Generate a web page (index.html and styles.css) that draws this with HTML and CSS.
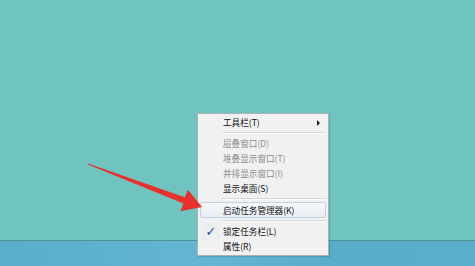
FILE: index.html
```html
<!DOCTYPE html>
<html>
<head>
<meta charset="utf-8">
<link rel="stylesheet" href="styles.css">
</head>
<body>
<div class="screen">
  <div class="desktop"></div>
  <div class="taskbar"></div>
  <div class="menu">
    <div class="item tall"><span class="label">工具栏(T)</span><span class="sub"></span></div>
    <div class="sep"></div>
    <div class="item dis"><span class="label">层叠窗口(D)</span></div>
    <div class="item dis"><span class="label">堆叠显示窗口(T)</span></div>
    <div class="item dis"><span class="label">并排显示窗口(I)</span></div>
    <div class="item"><span class="label">显示桌面(S)</span></div>
    <div class="sep"></div>
    <div class="item tall hot"><span class="label">启动任务管理器(K)</span></div>
    <div class="sep"></div>
    <div class="item"><span class="check">✓</span><span class="label">锁定任务栏(L)</span></div>
    <div class="item"><span class="label">属性(R)</span></div>
  </div>
  <svg class="arrow" width="475" height="266" viewBox="0 0 475 266">
    <polygon points="88,163.5 184.8,197.2 187.9,189.8 202,207 180.4,211.2 183.4,203.6 88,164.5" fill="#e8312d"/>
  </svg>
</div>
</body>
</html>
```
FILE: styles.css
```css
html, body {
  margin: 0;
  padding: 0;
}
body {
  font-family: "Noto Sans CJK SC", "Noto Sans", sans-serif;
}
.screen {
  position: relative;
  width: 475px;
  height: 266px;
  overflow: hidden;
  display: flex;
  flex-direction: column;
}
.desktop {
  height: 241px;
  background: #70c4c0;
  border-bottom: 1px solid #4b9298;
  box-sizing: border-box;
}
.taskbar {
  flex: 1;
  background: linear-gradient(90deg, #5aaecb 0%, #64b6d2 45%, #58adca 70%, #5aaecb 100%);
}
.menu {
  position: absolute;
  left: 197px;
  top: 113px;
  width: 132px;
  height: 143px;
  box-sizing: border-box;
  background: #f1f1f1;
  border: 1px solid #a9b1b1;
  padding: 0 2px;
  display: flex;
  flex-direction: column;
  box-shadow: 1px 1px 1px rgba(0,0,0,0.12);
}
.item {
  position: relative;
  height: 15px;
  display: flex;
  align-items: center;
  padding-left: 23px;
  font-size: 8.6px;
  color: #111;
  box-sizing: border-box;
}
.item.tall {
  height: 16px;
}
.item.dis {
  color: #8e8e8e;
}
.item.hot {
  background: linear-gradient(#f4f7fa, #e8eef4);
  border: 1px solid #c2d2e2;
  border-radius: 2px;
  padding-left: 22px;
}
.label {
  line-height: 1;
  white-space: nowrap;
}
.sub {
  position: absolute;
  right: 6px;
  top: 6px;
  width: 0;
  height: 0;
  border-left: 3px solid #222;
  border-top: 3px solid transparent;
  border-bottom: 3px solid transparent;
}
.check {
  position: absolute;
  left: 2px;
  top: -1px;
  width: 18px;
  height: 17px;
  display: flex;
  align-items: center;
  justify-content: center;
  color: #1e4f9c;
  font-size: 13px;
  font-weight: bold;
  font-family: "DejaVu Sans", sans-serif;
  background: #eceef0;
  border-radius: 2px;
}
.sep {
  height: 6px;
  display: flex;
  align-items: center;
  padding-left: 22px;
}
.sep::after {
  content: "";
  flex: 1;
  height: 1px;
  background: #d8d8d8;
  border-bottom: 1px solid #fafafa;
}
.arrow {
  position: absolute;
  left: 0;
  top: 0;
  pointer-events: none;
}
```
